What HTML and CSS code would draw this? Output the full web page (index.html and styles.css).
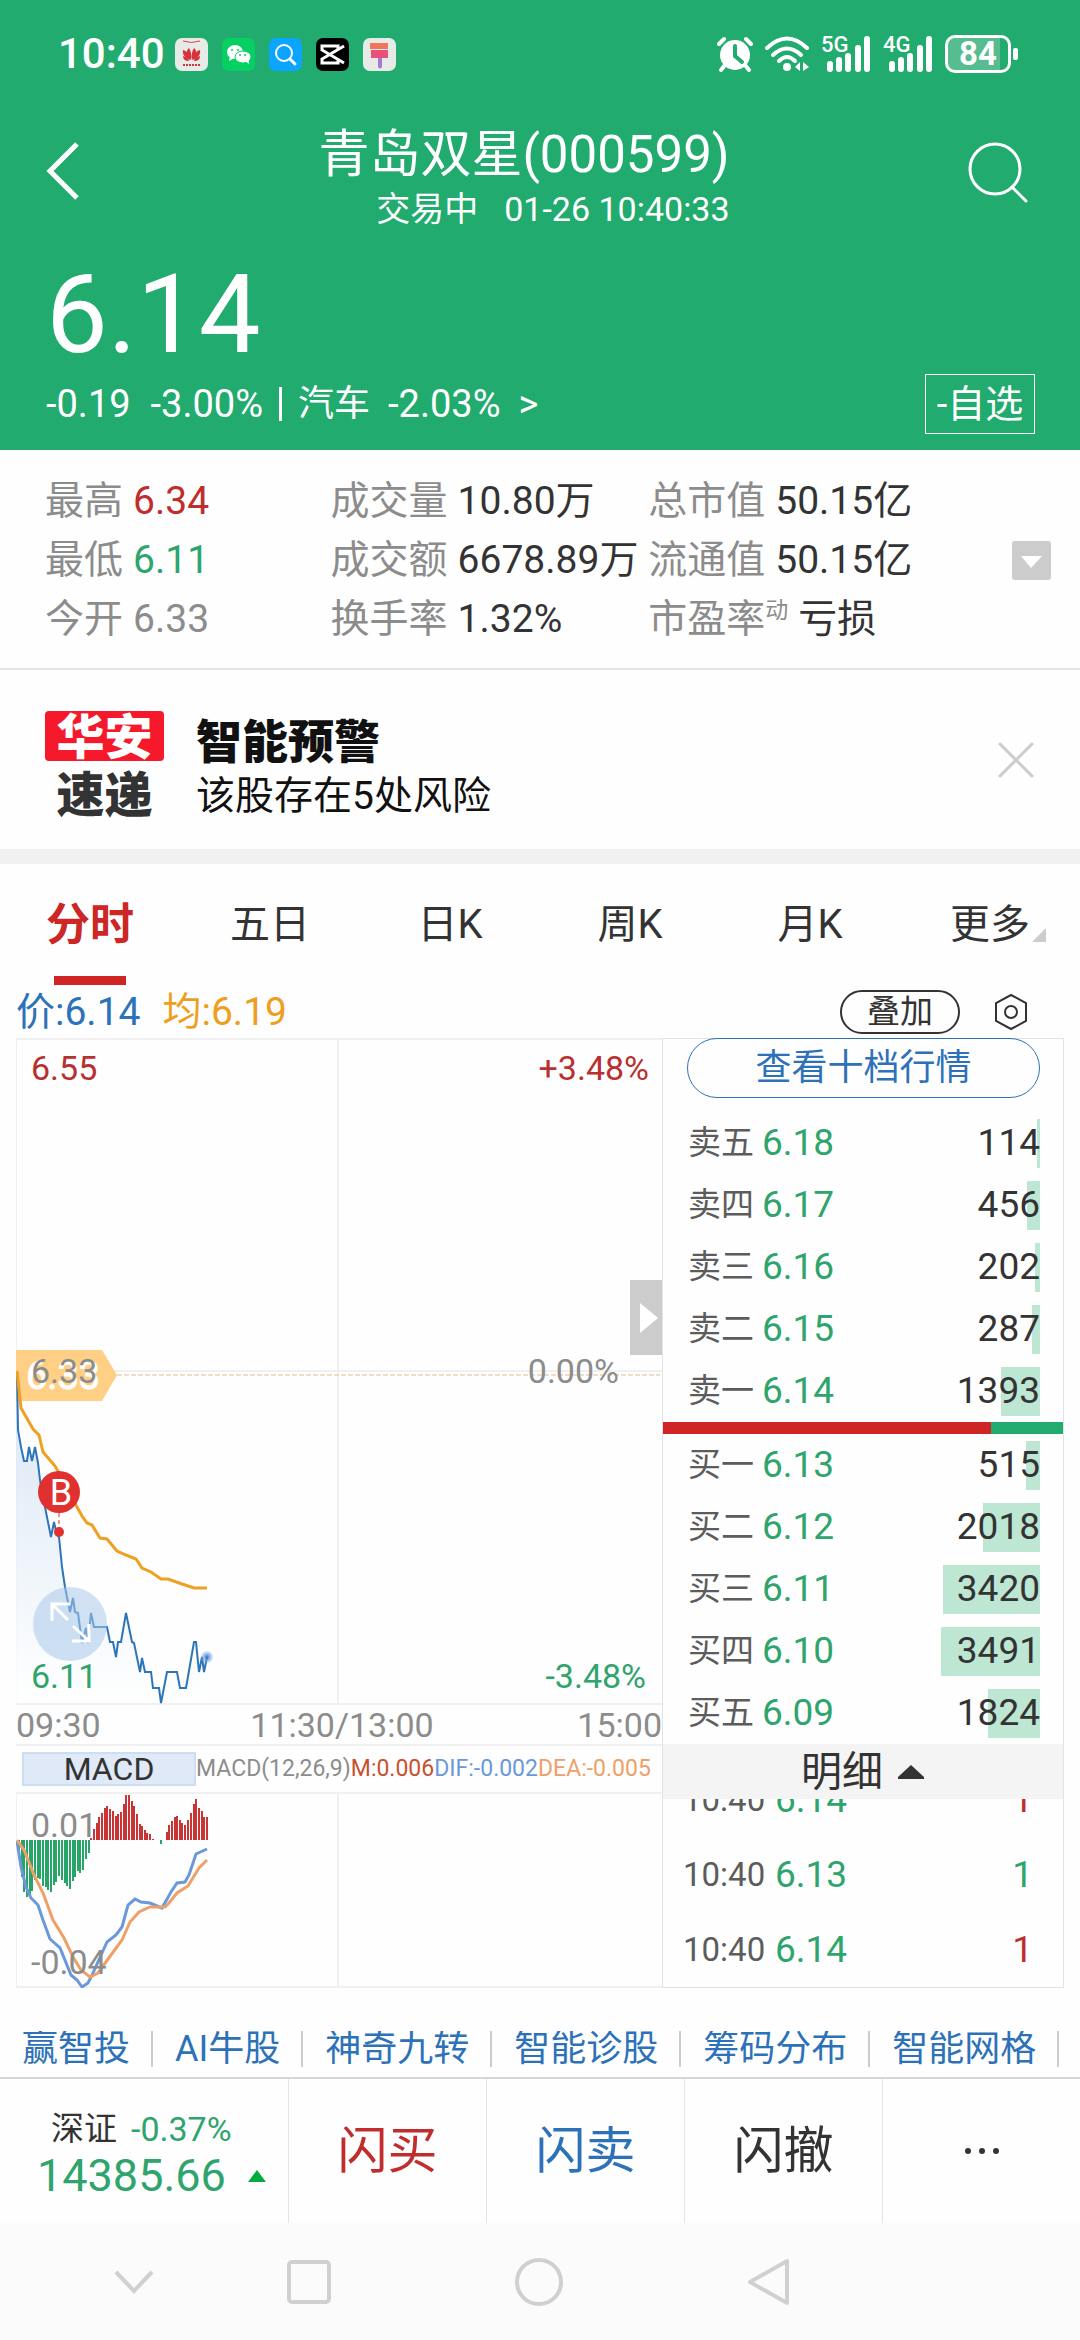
FILE: index.html
```html
<!DOCTYPE html>
<html lang="zh-CN">
<head>
<meta charset="utf-8">
<meta name="viewport" content="width=device-width">
<title>青岛双星(000599)</title>
<link rel="stylesheet" href="styles.css">
</head>
<body>
<header class="top">
  <div class="status">
    <span class="clock">10:40</span>
    <div class="apps">
      <svg viewBox="0 0 33 33"><rect width="33" height="33" rx="7" fill="#e6ebe8"/><path d="M8 3q8 3 17 0" fill="none" stroke="#d8404a" stroke-width="1"/><g fill="#d8323c"><path d="M16 22c-4-3-6-9-2-12 2 3 3 8 2 12z"/><path d="M17 22c4-3 6-9 2-12-2 3-3 8-2 12z"/><path d="M15 22c-5-2-8-6-7-10 4 1 7 5 7 10z"/><path d="M18 22c5-2 8-6 7-10-4 1-7 5-7 10z"/><path d="M14 23c-4 0-6-2-6-5 3 1 5 2 6 5z"/><path d="M19 23c4 0 6-2 6-5-3 1-5 2-6 5z"/></g><path d="M8 27h17" stroke="#d8323c" stroke-width="2" stroke-dasharray="2 1"/></svg>
      <svg viewBox="0 0 33 33"><rect width="33" height="33" rx="7" fill="#07d063"/><ellipse cx="13" cy="14" rx="8" ry="7" fill="#fff"/><path d="M8 18l-1 5 5-3z" fill="#fff"/><ellipse cx="21" cy="19" rx="8" ry="6" fill="#fff" stroke="#07d063" stroke-width="1"/><path d="M23 23l4 3v-5z" fill="#fff"/><g fill="#07d063"><circle cx="10" cy="12" r="1"/><circle cx="16" cy="12" r="1"/><circle cx="18" cy="17" r="1"/><circle cx="23" cy="17" r="1"/></g></svg>
      <svg viewBox="0 0 33 33"><rect width="33" height="33" rx="7" fill="#0ba4ff"/><circle cx="15" cy="15" r="8" fill="none" stroke="#fff" stroke-width="2"/><path d="M21 21l5 5" stroke="#fff" stroke-width="3" stroke-linecap="round"/></svg>
      <svg viewBox="0 0 33 33"><rect width="33" height="33" rx="7" fill="#000"/><path d="M28 8L6 21v4h16v-3M28 25L6 12V8h16v3" fill="none" stroke="#fff" stroke-width="3"/></svg>
      <svg viewBox="0 0 33 33"><rect width="33" height="33" rx="7" fill="#e6ebe8"/><path d="M7 5h18v6H7z" fill="#f0765a"/><path d="M8 12h17v8H8z" fill="#e8517c"/><path d="M15 20h4v9q-2 3-4 0z" fill="#a57ad0"/></svg>
    </div>
    <div class="signals">
      <svg class="alarm" viewBox="0 0 36 36"><circle cx="18" cy="19" r="15" fill="#fff"/><path d="M2 8l5-5M34 8l-5-5M8 29l-4 5M28 29l4 5" stroke="#fff" stroke-width="4" stroke-linecap="round"/><path d="M18 10v10l7 6" fill="none" stroke="#22ab6e" stroke-width="4" stroke-linecap="round"/></svg>
      <svg class="wifi" viewBox="0 0 44 36"><g fill="none" stroke="#fff" stroke-width="4" stroke-linecap="round"><path d="M2 12q20-19 40 0"/><path d="M8 19q14-13 28 0"/><path d="M14 25q8-8 16 0"/></g><circle cx="22" cy="31" r="4" fill="#fff"/><path d="M35 26v9l-5-4zM38 26v9l6-4z" fill="#fff"/></svg>
      <div class="cell"><span>5G</span><svg viewBox="0 0 44 36"><path d="M3 28v5M12 24v9M21 20v13M31 12v21M40 3v30" stroke="#fff" stroke-width="6" stroke-linecap="round"/></svg></div>
      <div class="cell"><span>4G</span><svg viewBox="0 0 44 36"><path d="M3 28v5M12 24v9M21 20v13M31 12v21M40 3v30" stroke="#fff" stroke-width="6" stroke-linecap="round"/></svg></div>
      <div class="battery"><span>84</span></div>
    </div>
  </div>
  <div class="title-row">
    <button class="icon-btn" aria-label="返回"><svg width="34" height="60" viewBox="0 0 34 60"><path d="M31 3L4 30l27 27" fill="none" stroke="#fff" stroke-width="5"/></svg></button>
    <div class="title">
      <h1>青岛双星(000599)</h1>
      <p><span>交易中</span><span>01-26 10:40:33</span></p>
    </div>
    <button class="icon-btn" aria-label="搜索"><svg width="60" height="62" viewBox="0 0 60 62"><circle cx="27" cy="28" r="25" fill="none" stroke="#fff" stroke-width="3"/><path d="M44 46l14 14" stroke="#fff" stroke-width="3" stroke-linecap="round"/></svg></button>
  </div>
  <div class="price">6.14</div>
  <div class="change-row">
    <span>-0.19</span><span>-3.00%</span><i></i><a href="#sector"><span>汽车</span><span>-2.03%</span><span>&gt;</span></a>
    <button class="watch">-自选</button>
  </div>
</header>

<section class="stats">
  <dl>
    <div><dt>最高</dt><dd class="red">6.34</dd></div>
    <div><dt>成交量</dt><dd>10.80万</dd></div>
    <div><dt>总市值</dt><dd>50.15亿</dd></div>
    <div><dt>最低</dt><dd class="green">6.11</dd></div>
    <div><dt>成交额</dt><dd>6678.89万</dd></div>
    <div><dt>流通值</dt><dd>50.15亿</dd></div>
    <div><dt>今开</dt><dd class="gray">6.33</dd></div>
    <div><dt>换手率</dt><dd>1.32%</dd></div>
    <div class="pe"><dt>市盈率<sup>动</sup></dt><dd>亏损</dd></div>
  </dl>
  <button class="icon-btn" aria-label="展开"><svg width="39" height="39" viewBox="0 0 39 39"><rect width="39" height="39" rx="3" fill="#ccc"/><path d="M9 15h21L19 27z" fill="#fff"/></svg></button>
</section>

<section class="notice">
  <div class="brand"><b>华安</b><b>速递</b></div>
  <div class="notice-text"><h2>智能预警</h2><p>该股存在5处风险</p></div>
  <button class="icon-btn" aria-label="关闭"><svg width="36" height="36" viewBox="0 0 36 36"><path d="M2 2l32 32M34 2L2 34" stroke="#ccc" stroke-width="3" stroke-linecap="round"/></svg></button>
</section>

<nav class="tabs">
  <button class="on">分时</button><button>五日</button><button>日K</button><button>周K</button><button>月K</button><button class="more">更多</button>
</nav>

<div class="legend">
  <span class="blue">价:6.14</span><span class="orange">均:6.19</span>
  <button class="overlay">叠加</button>
  <button class="icon-btn" aria-label="设置"><svg width="34" height="38" viewBox="0 0 34 38"><path d="M17 2l15 8v18l-15 8-15-8V10z" fill="none" stroke="#333" stroke-width="2"/><circle cx="17" cy="19" r="6" fill="none" stroke="#333" stroke-width="2"/></svg></button>
</div>

<main class="quote">
  <section class="charts">
    <svg class="chart" viewBox="0 0 646 667">
      <defs>
        <linearGradient id="area" x1="0" y1="0" x2="0" y2="1"><stop offset="0" stop-color="#cfe0f2"/><stop offset="1" stop-color="#fff"/></linearGradient>
        <radialGradient id="glow"><stop offset="0" stop-color="#2d72c0"/><stop offset="1" stop-color="#8fb8ec" stop-opacity=".3"/></radialGradient>
      </defs>
      <path d="M0 666V1H646M322 1V666M0 666H646M0 333H646" fill="none" stroke="#f0f0f0" stroke-width="2"/>
      <path d="M101 337H644" stroke="#e0bb8c" stroke-width="1" stroke-dasharray="5 2"/>
      <path d="M0 333L2 392 5 409 8 423H11L13 409 16 423 19 409 22 425 24 442 29 469 35 499 38 484 41 497 43 499 46 529 49 549 54 574 57 560 59 574 62 575 66 605 70 590 72 605 75 575 78 589H91L94 604H97L100 619 102 604H105L110 575 116 604 118 605 124 634 126 620 129 634H135L137 650H143L145 665 151 634H161L164 650H170L178 604H180L183 634 186 619 188 634 191 619V665H0z" fill="url(#area)" opacity=".8"/>
      <path d="M0 312H86L101 337 86 363H0z" fill="#ffcf85"/>
      <text x="10" y="351" font-size="38" fill="#fff" stroke="#fff">6.33</text>
      <path d="M1 333L2 392 5 409 8 423H11L13 409 16 423 19 409 22 425 24 442 29 469 35 499 38 484 41 497 43 499 46 529 49 549 54 574 57 560 59 574 62 575 66 605 70 590 72 605 75 575 78 589H91L94 604H97L100 619 102 604H105L110 575 116 604 118 605 124 634 126 620 129 634H135L137 650H143L145 665 151 634H161L164 650H170L178 604H180L183 634 186 619 188 634 191 619" fill="none" stroke="#2d75b8" stroke-width="2"/>
      <path d="M1 333L5 370 17 391 23 397 27 414 39 428 43 435 61 469 66 478 71 485 76 487 84 500 91 501 101 513 110 517 120 521 126 530 135 534 145 541H152L166 546 178 550H191" fill="none" stroke="#eea023" stroke-width="3"/>
      <circle cx="191" cy="619" r="6" fill="url(#glow)"/>
      <circle cx="54" cy="586" r="37" fill="#a9c8ea" opacity=".55"/>
      <path d="M52 582L36 566M36 583V566H54M57 588L73 603M73 586V603H56" fill="none" stroke="#fff" stroke-width="3"/>
      <path d="M43 475V490" stroke="#e0302f" stroke-width="1" stroke-dasharray="4 3"/>
      <circle cx="43" cy="494" r="5" fill="#e0302f"/><circle cx="43" cy="454" r="21" fill="#e0302f"/>
      <text x="45" y="467" font-size="36" fill="#fff" text-anchor="middle">B</text>
      <g font-size="34">
        <text x="15" y="42" class="t-red">6.55</text>
        <text x="633" y="42" class="t-red" text-anchor="end">+3.48%</text>
        <text x="15" y="345" class="t-gray">6.33</text>
        <text x="603" y="345" class="t-gray" text-anchor="end">0.00%</text>
        <text x="15" y="650" class="t-green">6.11</text>
        <text x="630" y="650" class="t-green" text-anchor="end">-3.48%</text>
      </g>
      <path d="M614 242H646V317H614z" fill="#ccc"/><path d="M624 265L642 280 624 295z" fill="#fff"/>
    </svg>
    <div class="axis"><span>09:30</span><span>11:30/13:00</span><span>15:00</span></div>
    <div class="macd-row">
      <button>MACD</button>
      <p><span class="gray">MACD(12,26,9)</span><span class="m">M:0.006</span><span class="dif">DIF:-0.002</span><span class="dea">DEA:-0.005</span></p>
    </div>
    <svg class="chart" viewBox="0 0 646 194">
      <path d="M0 0V193H646M322 0V193" fill="none" stroke="#f0f0f0" stroke-width="2"/>
      <text x="15" y="43" font-size="34" class="t-gray">0.01</text>
      <path d="M3 46V64M6 46V83M8 46V98M11 46V103M14 46V103M16 46V97M19 46V86M22 46V84M24 46V85M27 46V92M30 46V93M32 46V96M35 46V98M38 46V91M40 46V88M43 46V82M46 46V86M49 46V89M51 46V92M54 46V95M57 46V87M59 46V83M62 46V77M64 46V79M67 46V76M70 46V65M73 46V59M145 46V50" stroke="#27a468" stroke-width="2"/>
      <path d="M75 46V44M78 46V35M81 46V29M83 46V23M86 46V19M89 46V14M91 46V12M94 46V15M97 46V17M100 46V22M102 46V20M105 46V18M108 46V10M110 46V1M113 46V1M116 46V7M118 46V12M121 46V20M124 46V30M126 46V32M129 46V36M131 46V39M134 46V40M137 46V45M151 46V38M153 46V31M156 46V27M159 46V23M161 46V22M164 46V26M166 46V29M169 46V31M172 46V26M175 46V19M178 46V10M180 46V5M183 46V14M186 46V17M188 46V23M191 46V23" stroke="#c93434" stroke-width="2"/>
      <path d="M1 47L5 73 10 93 15 104 22 111 27 126 34 145 44 154 55 181 61 186 66 193 72 189 76 181 86 159 91 148 100 141 106 133 112 111 119 105 125 108 134 109 146 114 155 98 161 89 169 88 173 81 180 60 191 55" fill="none" stroke="#6b98db" stroke-width="3"/>
      <path d="M1 46L8 56 18 81 27 99 37 126 48 144 57 163 65 176 74 183 82 179 95 161 106 146 114 128 123 118 134 113H149L153 109 161 99 172 92 183 74 191 66" fill="none" stroke="#efa068" stroke-width="3"/>
      <text x="15" y="180" font-size="34" class="t-gray">-0.04</text>
    </svg>
  </section>

  <section class="book">
    <button class="ten">查看十档行情</button>
    <table>
      <tr><th>卖五</th><td>6.18</td><td style="--w:3px">114</td></tr>
      <tr><th>卖四</th><td>6.17</td><td style="--w:13px">456</td></tr>
      <tr><th>卖三</th><td>6.16</td><td style="--w:5px">202</td></tr>
      <tr><th>卖二</th><td>6.15</td><td style="--w:8px">287</td></tr>
      <tr><th>卖一</th><td>6.14</td><td style="--w:39px">1393</td></tr>
    </table>
    <div class="ratio"><i style="width:82%"></i></div>
    <table>
      <tr><th>买一</th><td>6.13</td><td style="--w:14px">515</td></tr>
      <tr><th>买二</th><td>6.12</td><td style="--w:57px">2018</td></tr>
      <tr><th>买三</th><td>6.11</td><td style="--w:97px">3420</td></tr>
      <tr><th>买四</th><td>6.10</td><td style="--w:99px">3491</td></tr>
      <tr><th>买五</th><td>6.09</td><td style="--w:52px">1824</td></tr>
    </table>
    <button class="detail">明细<svg width="28" height="16" viewBox="0 0 28 16"><path d="M14 1L27 13v2H1v-2z" fill="#333"/></svg></button>
    <ul class="ticks">
      <li><time>10:40</time><span class="green">6.14</span><b class="red">1</b></li>
      <li><time>10:40</time><span class="green">6.13</span><b class="green">1</b></li>
      <li><time>10:40</time><span class="green">6.14</span><b class="red">1</b></li>
    </ul>
  </section>
</main>

<nav class="links">
  <a href="#a">赢智投</a><a href="#b">AI牛股</a><a href="#c">神奇九转</a><a href="#d">智能诊股</a><a href="#e">筹码分布</a><a href="#f">智能网格</a>
</nav>

<footer>
  <div class="trade">
    <a class="index" href="#index">
      <span class="index-top"><span>深证</span><span class="green">-0.37%</span></span>
      <span class="index-val green">14385.66<svg width="18" height="14" viewBox="0 0 18 14"><path d="M9 1l9 12H0z" fill="#04ab45"/></svg></span>
    </a>
    <button class="red">闪买</button><button class="blue">闪卖</button><button>闪撤</button>
    <button aria-label="更多"><svg width="36" height="8" viewBox="0 0 36 8"><g fill="#333"><circle cx="4" cy="4" r="3"/><circle cx="18" cy="4" r="3"/><circle cx="32" cy="4" r="3"/></g></svg></button>
  </div>
  <div class="sysnav">
    <button class="hide" aria-label="收起"><svg width="44" height="50" viewBox="0 0 44 50"><path d="M4 15l18 19 18-19" fill="none" stroke="#d0d0d0" stroke-width="4"/></svg></button>
    <button aria-label="最近任务"><svg width="48" height="50" viewBox="0 0 48 50"><rect x="4" y="5" width="40" height="40" rx="3" fill="none" stroke="#d0d0d0" stroke-width="4"/></svg></button>
    <button aria-label="主页"><svg width="50" height="50" viewBox="0 0 50 50"><circle cx="25" cy="25" r="22" fill="none" stroke="#d0d0d0" stroke-width="4"/></svg></button>
    <button aria-label="返回上一页"><svg width="46" height="50" viewBox="0 0 46 50"><path d="M41 4v42L4 25z" fill="none" stroke="#d0d0d0" stroke-width="4" stroke-linejoin="round"/></svg></button>
  </div>
</footer>
</body>
</html>
```

FILE: styles.css
```css
* { box-sizing: border-box; }
body {
  margin: 0;
  background: #fefefe;
  color: #333;
  font-family: Roboto, "Noto Sans CJK SC", sans-serif;
  font-size: 36px;
  line-height: 48px;
}
h1, h2, p, dl, dd, ul { margin: 0; padding: 0; font-weight: 400; }
ul { list-style: none; }
a { color: inherit; text-decoration: none; }
svg { display: block; }
button {
  margin: 0;
  padding: 0;
  border: 0;
  background: none;
  color: inherit;
  font: inherit;
}
.icon-btn { flex: none; }
.red { color: #c02d2d; }
.green { color: #2fa46d; }
.gray { color: #8c8c8c; }
.blue { color: #2d72b8; }
.orange { color: #ee9f22; }

/* header */
.top {
  padding: 24px 45px 16px 46px;
  background: #22ab6e;
  color: #fff;
}
.status { display: flex; align-items: center; height: 60px; padding: 0 17px 0 12px; }
.clock { font-size: 42px; font-weight: 500; }
.apps { display: flex; gap: 14px; margin-left: 10px; }
.apps svg { width: 33px; height: 33px; }
.signals { display: flex; align-items: center; gap: 12px; margin-left: auto; }
.alarm { width: 36px; height: 36px; }
.wifi { width: 44px; height: 36px; }
.cell { position: relative; width: 50px; }
.cell svg { width: 44px; height: 36px; margin-left: 6px; }
.cell span {
  position: absolute;
  top: 0;
  left: 0;
  font-size: 22px;
  font-weight: 500;
  line-height: 18px;
}
.battery {
  position: relative;
  width: 66px;
  height: 38px;
  margin-right: 7px;
  border: 3px solid #fff;
  border-radius: 10px;
  background: linear-gradient(90deg, #57bd90 86%, transparent 86%);
  font-size: 33px;
  font-weight: 700;
  line-height: 32px;
  text-align: center;
}
.battery::after {
  content: "";
  position: absolute;
  top: 10px;
  right: -10px;
  width: 5px;
  height: 12px;
  border-radius: 2px;
  background: #fff;
}
.title-row {
  display: flex;
  align-items: flex-start;
  justify-content: space-between;
  margin-top: 38px;
  padding-right: 7px;
}
.title-row .icon-btn { margin-top: 19px; }
.title h1 { font-size: 51px; line-height: 66px; }
.title p {
  display: flex;
  justify-content: flex-end;
  gap: 26px;
  font-size: 34px;
  line-height: 42px;
}
.price { margin-top: 28px; font-size: 110px; line-height: 114px; }
.change-row { display: flex; align-items: center; gap: 20px; margin-top: 2px; font-size: 38px; }
.change-row i { width: 3px; height: 34px; margin: 0 -4px; background: #fff; }
.change-row a { display: flex; gap: 18px; }
.change-row a span:first-child { font-size: 36px; }
.watch {
  width: 110px;
  height: 60px;
  margin-left: auto;
  border: 1px solid #fff;
}

/* key figures */
.stats {
  display: flex;
  align-items: center;
  padding: 22px 29px 19px 45px;
  border-bottom: 2px solid #e5e5e5;
  font-size: 39px;
}
.stats dl {
  display: grid;
  flex: 1;
  grid-template-columns: 285fr 317fr 363fr;
}
.stats dl div { display: flex; gap: 10px; line-height: 59px; white-space: nowrap; }
.stats dt { color: #8c8c8c; }
.stats sup {
  display: inline-block;
  font-size: 23px;
  line-height: 30px;
  vertical-align: 14px;
}

/* risk notice */
.notice {
  display: flex;
  align-items: center;
  padding: 41px 46px 26px 45px;
  border-bottom: 15px solid #f1f1f1;
  color: #111;
}
.notice .icon-btn { margin-bottom: 14px; }
.brand {
  width: 119px;
  font-size: 48px;
  text-align: center;
}
.brand b {
  display: block;
  padding-top: 8px;
  color: #333;
  font-weight: 900;
  line-height: 54px;
}
.brand b:first-child {
  padding-top: 4px;
  border-radius: 4px;
  background: #f5192b;
  color: #fff;
  line-height: 46px;
}
.notice-text { flex: 1; margin-left: 32px; padding-top: 4px; }
.notice-text h2 { font-size: 46px; font-weight: 900; line-height: 54px; }
.notice-text p { font-size: 39px; line-height: 54px; }

/* period tabs */
.tabs { display: grid; grid-template-columns: repeat(6, 1fr); }
.tabs button { position: relative; height: 121px; font-size: 40px; }
.tabs .on { color: #cc2626; font-size: 44px; font-weight: 700; }
.on::after {
  content: "";
  position: absolute;
  bottom: 0;
  left: calc(50% - 36px);
  width: 72px;
  height: 9px;
  background: #cf2525;
}
.more::after {
  content: "";
  position: absolute;
  right: 34px;
  top: 64px;
  border: 7px solid;
  border-color: transparent #ccc #ccc transparent;
}
.legend {
  display: flex;
  align-items: center;
  height: 53px;
  padding: 0 52px 0 16px;
  font-size: 39px;
}
.legend .orange { margin-left: 22px; }
.overlay {
  width: 120px;
  height: 44px;
  margin: 0 34px 0 auto;
  border: 2px solid #333;
  border-radius: 22px;
  font-size: 33px;
  line-height: 40px;
}

/* charts */
.quote {
  display: grid;
  grid-template-columns: 646fr 402fr;
  padding: 0 16px;
}
.chart { width: 100%; height: auto; }
.t-red { fill: #b83030; }
.t-green { fill: #2fa46d; }
.t-gray { fill: #8c8c8c; }
.axis {
  display: flex;
  justify-content: space-between;
  height: 41px;
  border-bottom: 2px solid #f0f0f0;
  color: #8c8c8c;
  font-size: 34px;
  line-height: 41px;
}
.axis span:nth-child(2) { margin-left: 6px; }
.macd-row {
  display: flex;
  align-items: center;
  height: 48px;
  padding-left: 6px;
  border-bottom: 2px solid #f0f0f0;
}
.macd-row button {
  flex: none;
  width: 174px;
  height: 34px;
  border: 2px solid #cdddf2;
  background: #dfe9f7;
  font-size: 32px;
  line-height: 30px;
}
.macd-row p { display: flex; font-size: 23px; }
.m { color: #c9502f; }
.dif { color: #6b98db; }
.dea { color: #efa068; }

/* order book */
.book {
  display: flex;
  flex-direction: column;
  border: 1px solid #e2e2e2;
}
.ten {
  height: 60px;
  margin: -1px 23px 14px 24px;
  border: 1px solid #2d72b8;
  border-radius: 30px;
  color: #2d72b8;
}
.book table {
  border-collapse: collapse;
  margin: 0 23px 0 25px;
}
.book tbody { display: block; }
.book tr { display: flex; align-items: center; height: 62px; }
.book th { width: 74px; padding: 0; color: #5c5c5c; font-size: 33px; font-weight: 400; text-align: left; }
.book td { padding: 0; color: #2fa46d; font-size: 37px; line-height: 50px; }
.book td:last-child {
  flex: 1;
  background: linear-gradient(#bde6d3, #bde6d3) no-repeat right / var(--w) 49px;
  color: #333;
  text-align: right;
}
.ratio { height: 12px; background: #22ab6e; }
.ratio i { display: block; height: 100%; background: #cf2525; }
.detail {
  display: flex;
  align-items: center;
  justify-content: center;
  gap: 14px;
  height: 55px;
  background: #f4f4f4;
  font-size: 41px;
}
.ticks {
  display: flex;
  flex-direction: column;
  justify-content: flex-end;
  height: 188px;
  padding: 0 30px 0 20px;
  overflow: hidden;
}
.ticks li { display: flex; flex: none; gap: 12px; height: 75px; line-height: 75px; font-size: 37px; }
.ticks time { width: 80px; color: #5c5c5c; font-size: 33px; }
.ticks b { margin-left: auto; font-weight: 400; }

/* tool links */
.links {
  display: flex;
  margin-top: 43px;
  padding-bottom: 10px;
  border-bottom: 2px solid #d5d5d5;
  overflow: hidden;
  color: #2d72b8;
  white-space: nowrap;
}
.links a {
  flex: none;
  padding: 0 21px 0 22px;
  line-height: 36px;
  border-right: 2px solid #ccc;
}

/* bottom bars */
.trade {
  display: grid;
  grid-template-columns: 288fr 198fr 198fr 198fr 198fr;
  height: 144px;
}
.trade > * + * { border-left: 1px solid #e5e5e5; }
.trade button { display: flex; align-items: center; justify-content: center; font-size: 50px; }
.index { display: flex; flex-direction: column; justify-content: center; padding: 6px 20px 0 37px; }
.index-top { display: flex; gap: 14px; padding-left: 14px; font-size: 33px; line-height: 44px; }
.index-top .green { font-size: 34px; }
.index-val { display: flex; align-items: center; gap: 22px; font-size: 45px; line-height: 50px; }
.sysnav {
  display: grid;
  grid-template-columns: 194fr 230fr 230fr 230fr 196fr;
  align-items: center;
  height: 117px;
  background: #fbfbfb;
}
.sysnav button { display: flex; justify-content: center; }
.sysnav .hide { justify-content: flex-end; padding-right: 38px; }
```
